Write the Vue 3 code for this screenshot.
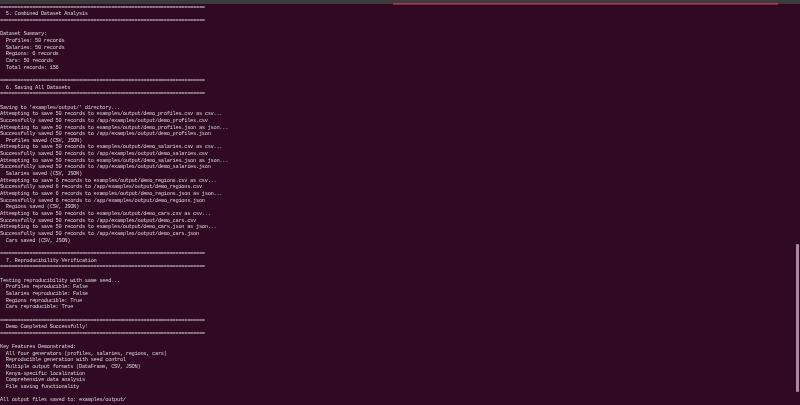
<script setup>
const sep = '='.repeat(70)
const lines = [
  sep,
  '  5. Combined Dataset Analysis',
  sep,
  '',
  'Dataset Summary:',
  '  Profiles: 50 records',
  '  Salaries: 50 records',
  '  Regions: 6 records',
  '  Cars: 50 records',
  '  Total records: 156',
  '',
  sep,
  '  6. Saving All Datasets',
  sep,
  '',
  "Saving to 'examples/output/' directory...",
  'Attempting to save 50 records to examples/output/demo_profiles.csv as csv...',
  'Successfully saved 50 records to /app/examples/output/demo_profiles.csv',
  'Attempting to save 50 records to examples/output/demo_profiles.json as json...',
  'Successfully saved 50 records to /app/examples/output/demo_profiles.json',
  '  Profiles saved (CSV, JSON)',
  'Attempting to save 50 records to examples/output/demo_salaries.csv as csv...',
  'Successfully saved 50 records to /app/examples/output/demo_salaries.csv',
  'Attempting to save 50 records to examples/output/demo_salaries.json as json...',
  'Successfully saved 50 records to /app/examples/output/demo_salaries.json',
  '  Salaries saved (CSV, JSON)',
  'Attempting to save 6 records to examples/output/demo_regions.csv as csv...',
  'Successfully saved 6 records to /app/examples/output/demo_regions.csv',
  'Attempting to save 6 records to examples/output/demo_regions.json as json...',
  'Successfully saved 6 records to /app/examples/output/demo_regions.json',
  '  Regions saved (CSV, JSON)',
  'Attempting to save 50 records to examples/output/demo_cars.csv as csv...',
  'Successfully saved 50 records to /app/examples/output/demo_cars.csv',
  'Attempting to save 50 records to examples/output/demo_cars.json as json...',
  'Successfully saved 50 records to /app/examples/output/demo_cars.json',
  '  Cars saved (CSV, JSON)',
  '',
  sep,
  '  7. Reproducibility Verification',
  sep,
  '',
  'Testing reproducibility with same seed...',
  '  Profiles reproducible: False',
  '  Salaries reproducible: False',
  '  Regions reproducible: True',
  '  Cars reproducible: True',
  '',
  sep,
  '  Demo Completed Successfully!',
  sep,
  '',
  'Key Features Demonstrated:',
  '  All four generators (profiles, salaries, regions, cars)',
  '  Reproducible generation with seed control',
  '  Multiple output formats (DataFrame, CSV, JSON)',
  '  Kenya-specific localization',
  '  Comprehensive data analysis',
  '  File saving functionality',
  '',
  'All output files saved to: examples/output/',
]
</script>

<template>
  <div class="window">
    <div class="topbar"><div class="progress"></div></div>
    <div class="terminal">
      <div v-for="(line, i) in lines" :key="i" class="line">{{ line }}</div>
    </div>
    <div class="scrollthumb"></div>
  </div>
</template>

<style>
html, body { margin: 0; background: #300a24; }
</style>

<style scoped>
.window {
  position: relative;
  width: 800px;
  height: 405px;
  overflow: hidden;
  background: #300a24;
  display: flex;
  flex-direction: column;
}
.topbar {
  height: 4px;
  flex: none;
  background: #3b3b3b;
  display: flex;
  justify-content: flex-end;
  padding-right: 22px;
  position: relative;
  z-index: 1;
}
.progress {
  width: 385px;
  height: 2px;
  margin-top: 3px;
  background: linear-gradient(#b04a62, #7e1434);
}
.terminal {
  padding-top: 0.7px;
  font-family: "Liberation Mono", monospace;
  font-size: 5.4px;
  letter-spacing: -0.31px;
  line-height: 6.667px;
  color: #d6d0d3;
  white-space: pre;
  filter: blur(0.4px);
}
.line {
  height: 6.667px;
}
.scrollthumb {
  position: absolute;
  left: 796px;
  top: 244px;
  width: 3px;
  height: 148px;
  border-radius: 1px;
  background: #a88b9d;
}
</style>
